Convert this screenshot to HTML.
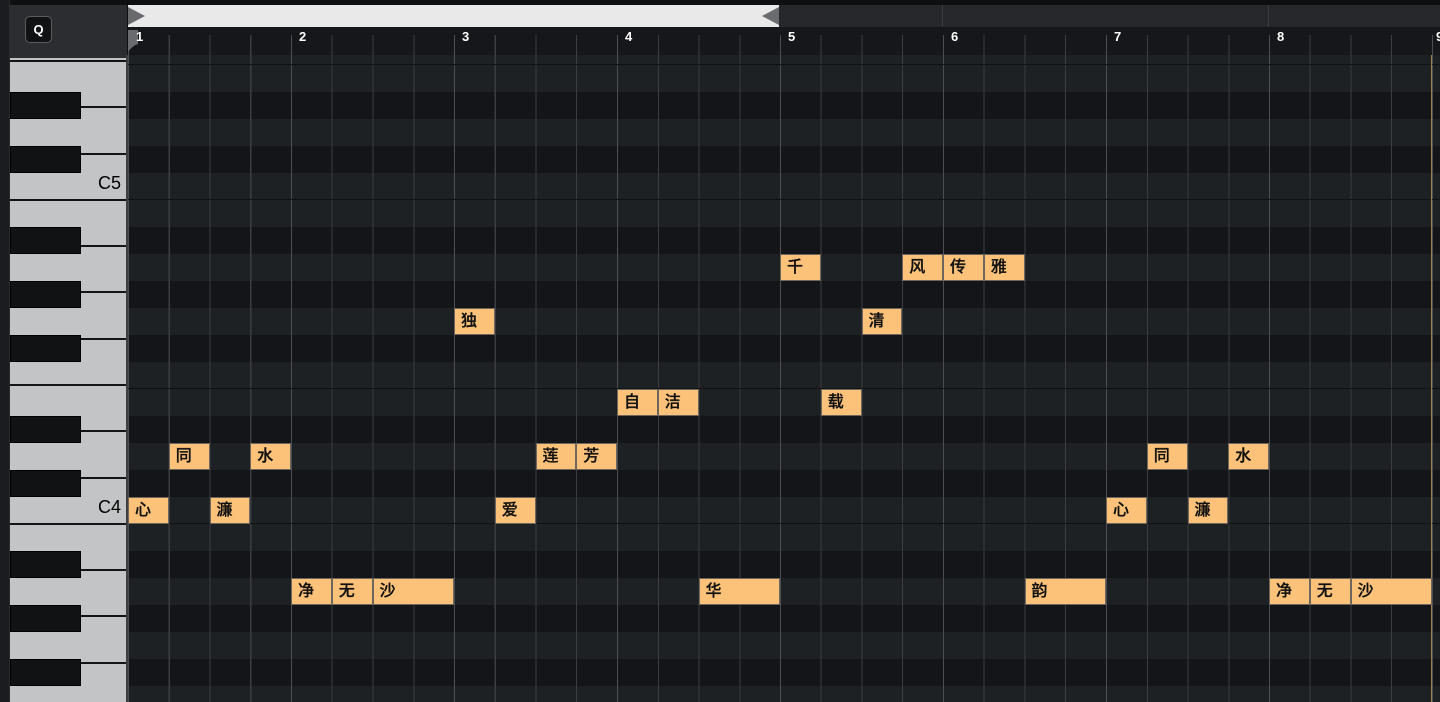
<!DOCTYPE html>
<html><head><meta charset="utf-8"><style>
*{margin:0;padding:0;box-sizing:border-box}
body{width:1440px;height:702px;overflow:hidden;background:#0e0f11;position:relative;font-family:"Liberation Sans","Noto Sans CJK SC",sans-serif}
.a{position:absolute}
#grid{left:128px;top:38px;width:1312px;height:664px;
background:
repeating-linear-gradient(90deg,#4c4e53 0 1px,transparent 1px 163px),
repeating-linear-gradient(90deg,#3b3d41 0 1px,transparent 1px 40.75px),
linear-gradient(180deg,#1e2124 0 54px,#141518 54px 81px,#1e2124 81px 108px,#141518 108px 135px,#1e2124 135px 189px,#141518 189px 216px,#1e2124 216px 243px,#141518 243px 270px,#1e2124 270px 297px,#141518 297px 324px);
background-size:auto,auto,100% 324px;background-repeat:repeat,repeat,repeat-y}
.rl{position:absolute;left:128px;width:1312px;height:1px;background:#111214}
.n{position:absolute;width:40.75px;height:27px;background:#fdc27a;border:1px solid #6e665c;font-size:16px;line-height:25px;padding-left:6px;color:#111;font-weight:500;-webkit-text-stroke:0.3px #111}
.bk{position:absolute;left:10px;width:71px;height:27px;background:#111214;border:1px solid #000}
.wl{position:absolute;left:10px;width:116px;height:2px;background:#141414}
.lbl{position:absolute;font-size:13px;color:#fff;top:29px;font-weight:bold}
</style></head><body>
<div class="a" style="left:0;top:0;width:10px;height:702px;background:#1b1c1f;border-right:1px solid #2a2b2e"></div>
<div class="a" id="grid"></div>
<div class="rl" style="top:64px"></div>
<div class="rl" style="top:199px"></div>
<div class="rl" style="top:388px"></div>
<div class="rl" style="top:523px"></div>
<div class="a" style="left:1431px;top:55px;width:1px;height:647px;background:#9a8050"></div>
<!-- ruler -->
<div class="a" style="left:128px;top:27px;width:1312px;height:28px;background:#16171a;
background-image:repeating-linear-gradient(90deg,#4c4e53 0 1px,transparent 1px 163px),repeating-linear-gradient(90deg,#3b3d41 0 1px,transparent 1px 40.75px);background-position:0 8px;background-repeat:repeat-x;background-size:auto 20px"></div>
<div class="a" style="left:128px;top:5px;width:1312px;height:22px;background:#26282b"></div>
<div class="a" style="left:128px;top:5px;width:651px;height:22px;background:#e9e9e9"></div>
<svg class="a" style="left:128px;top:5px" width="20" height="22"><polygon points="0,2 17,11 0,20" fill="#6a6b6e"/></svg>
<svg class="a" style="left:761px;top:5px" width="20" height="22"><polygon points="18,2 1,11 18,20" fill="#6a6b6e"/></svg>
<svg class="a" style="left:128px;top:30px" width="12" height="22"><path d="M0,0 H10 V14 Q4,16 0,22 Z" fill="#6a6b6e"/></svg>
<div class="a" style="left:942px;top:5px;width:1px;height:22px;background:#3a3c40"></div>
<div class="a" style="left:1268px;top:5px;width:1px;height:22px;background:#3a3c40"></div>
<div class="lbl" style="left:136px">1</div>
<div class="lbl" style="left:299px">2</div>
<div class="lbl" style="left:462px">3</div>
<div class="lbl" style="left:625px">4</div>
<div class="lbl" style="left:788px">5</div>
<div class="lbl" style="left:951px">6</div>
<div class="lbl" style="left:1114px">7</div>
<div class="lbl" style="left:1277px">8</div>
<div class="lbl" style="left:1436px">9</div>
<!-- header box -->
<div class="a" style="left:10px;top:5px;width:117px;height:50px;background:#2c2d31"></div>
<div class="a" style="left:25px;top:16px;width:27px;height:27px;background:#111214;border:1px solid #5a5b5f;border-radius:5px;color:#fff;font-size:13px;font-weight:bold;text-align:center;line-height:25px">Q</div>
<!-- piano -->
<div class="a" style="left:10px;top:55px;width:116px;height:647px;background:#c3c4c6"></div>
<div class="a" style="left:126px;top:55px;width:2px;height:647px;background:#3d3e41"></div>
<div class="a" style="left:10px;top:55px;width:116px;height:3px;background:#2c2d31"></div>
<div class="wl" style="top:60px"></div>
<div class="wl" style="top:106px"></div>
<div class="wl" style="top:153px"></div>
<div class="wl" style="top:199px"></div>
<div class="wl" style="top:245px"></div>
<div class="wl" style="top:291px"></div>
<div class="wl" style="top:338px"></div>
<div class="wl" style="top:384px"></div>
<div class="wl" style="top:430px"></div>
<div class="wl" style="top:477px"></div>
<div class="wl" style="top:523px"></div>
<div class="wl" style="top:569px"></div>
<div class="wl" style="top:615px"></div>
<div class="wl" style="top:662px"></div>
<div class="bk" style="top:92px"></div>
<div class="bk" style="top:146px"></div>
<div class="bk" style="top:227px"></div>
<div class="bk" style="top:281px"></div>
<div class="bk" style="top:335px"></div>
<div class="bk" style="top:416px"></div>
<div class="bk" style="top:470px"></div>
<div class="bk" style="top:551px"></div>
<div class="bk" style="top:605px"></div>
<div class="bk" style="top:659px"></div>
<div class="a" style="left:60px;top:173px;width:61px;text-align:right;font-size:18px;color:#000">C5</div>
<div class="a" style="left:60px;top:497px;width:61px;text-align:right;font-size:18px;color:#000">C4</div>
<!-- notes -->
<div class="n" style="left:128px;top:497px">心</div>
<div class="n" style="left:168.75px;top:443px">同</div>
<div class="n" style="left:209.5px;top:497px">濂</div>
<div class="n" style="left:250.25px;top:443px">水</div>
<div class="n" style="left:291px;top:578px">净</div>
<div class="n" style="left:331.75px;top:578px">无</div>
<div class="n" style="left:372.5px;top:578px;width:81.5px">沙</div>
<div class="n" style="left:454px;top:308px">独</div>
<div class="n" style="left:494.75px;top:497px">爱</div>
<div class="n" style="left:535.5px;top:443px">莲</div>
<div class="n" style="left:576.25px;top:443px">芳</div>
<div class="n" style="left:617px;top:389px">自</div>
<div class="n" style="left:657.75px;top:389px">洁</div>
<div class="n" style="left:698.5px;top:578px;width:81.5px">华</div>
<div class="n" style="left:780px;top:254px">千</div>
<div class="n" style="left:820.75px;top:389px">载</div>
<div class="n" style="left:861.5px;top:308px">清</div>
<div class="n" style="left:902.25px;top:254px">风</div>
<div class="n" style="left:943px;top:254px">传</div>
<div class="n" style="left:983.75px;top:254px">雅</div>
<div class="n" style="left:1024.5px;top:578px;width:81.5px">韵</div>
<div class="n" style="left:1106px;top:497px">心</div>
<div class="n" style="left:1146.75px;top:443px">同</div>
<div class="n" style="left:1187.5px;top:497px">濂</div>
<div class="n" style="left:1228.25px;top:443px">水</div>
<div class="n" style="left:1269px;top:578px">净</div>
<div class="n" style="left:1309.75px;top:578px">无</div>
<div class="n" style="left:1350.5px;top:578px;width:81px">沙</div>
</body></html>
